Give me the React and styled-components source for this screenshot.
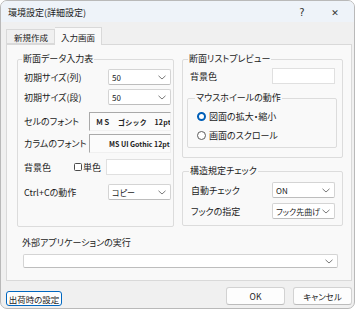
import React from 'react';
import styled, { createGlobalStyle } from 'styled-components';

const GlobalStyle = createGlobalStyle`
  html, body {
    margin: 0;
    padding: 0;
    background: #ffffff;
  }
  body {
    font-family: "Noto Sans CJK JP", "Noto Sans", sans-serif;
    font-size: 9px;
    font-feature-settings: "palt";
    color: #1b1b1b;
  }
`;

const Chevron = () => (
  <svg width="8" height="5" viewBox="0 0 8 5">
    <polyline points="0.5,0.8 4,4 7.5,0.8" fill="none" stroke="#6b6b6b" strokeWidth="0.9" />
  </svg>
);

const App = () => (
  <>
    <GlobalStyle />
    <Window>
      <TitleBar>
        <Title>環境設定(詳細設定)</Title>
        <TitleBtn>?</TitleBtn>
        <TitleBtn close>✕</TitleBtn>
      </TitleBar>
      <Body>
        <TabStrip>
          <Tab>新規作成</Tab>
          <Tab active>入力画面</Tab>
        </TabStrip>
        <TabPanel>
          <Columns>
            <Group width={157} height={174} pad="4px 2px 0 6px">
              <Legend>断面データ入力表</Legend>
              <Row>
                <Label>初期サイズ(列)</Label>
                <Combo width={63}>
                  <ComboText>50</ComboText>
                  <Chevron />
                </Combo>
              </Row>
              <Row gap={4}>
                <Label>初期サイズ(段)</Label>
                <Combo width={63}>
                  <ComboText>50</ComboText>
                  <Chevron />
                </Combo>
              </Row>
              <Row gap={7}>
                <Label>セルのフォント</Label>
                <FontBox indent={6} spacing={0.3}>ＭＳ　ゴシック　12pt</FontBox>
              </Row>
              <Row gap={3}>
                <Label>カラムのフォント</Label>
                <FontBox indent={19} spacing={0}>MS UI Gothic 12pt</FontBox>
              </Row>
              <Row gap={6}>
                <Label fixed={50}>背景色</Label>
                <Check />
                <CheckText>単色</CheckText>
                <TextBox width={65} height={16} />
              </Row>
              <Row gap={9}>
                <Label>Ctrl+Cの動作</Label>
                <Combo width={63}>
                  <ComboText>コピー</ComboText>
                  <Chevron />
                </Combo>
              </Row>
            </Group>
            <RightColumn>
              <Group width={161} height={105} pad="3px 7px 0 7px">
                <Legend>断面リストプレビュー</Legend>
                <Row>
                  <Label>背景色</Label>
                  <TextBox width={63} height={16} />
                </Row>
                <SubGroup>
                  <Legend>マウスホイールの動作</Legend>
                  <RadioRow>
                    <Radio checked />
                    <span>図面の拡大・縮小</span>
                  </RadioRow>
                  <RadioRow gap={7}>
                    <Radio />
                    <span>画面のスクロール</span>
                  </RadioRow>
                </SubGroup>
              </Group>
              <Group width={161} height={61} pad="5px 7px 0 8px">
                <Legend>構造規定チェック</Legend>
                <Row>
                  <Label>自動チェック</Label>
                  <Combo width={63}>
                    <ComboText>ON</ComboText>
                    <Chevron />
                  </Combo>
                </Row>
                <Row gap={5}>
                  <Label>フックの指定</Label>
                  <Combo width={63}>
                    <ComboText>フック先曲げ</ComboText>
                    <Chevron />
                  </Combo>
                </Row>
              </Group>
            </RightColumn>
          </Columns>
          <ExtSection>
            <ExtLabel>外部アプリケーションの実行</ExtLabel>
            <ExtCombo>
              <ComboText />
              <Chevron />
            </ExtCombo>
          </ExtSection>
        </TabPanel>
        <Footer>
          <ResetButton>出荷時の設定</ResetButton>
          <Spacer />
          <Button>OK</Button>
          <Button>キャンセル</Button>
        </Footer>
      </Body>
    </Window>
  </>
);

const Window = styled.div`
  width: 355px;
  height: 309px;
  box-sizing: border-box;
  background: #f0f0f0;
  border: 1px solid #b9b9b9;
  border-radius: 7px;
  overflow: hidden;
  display: flex;
  flex-direction: column;
`;

const TitleBar = styled.div`
  height: 21px;
  flex-shrink: 0;
  background: #eef3f9;
  display: flex;
  align-items: center;
  padding-left: 7px;
`;

const Title = styled.div`
  flex: 1;
  font-size: 9px;
  padding-top: 2px;
`;

const TitleBtn = styled.div`
  width: ${props => (props.close ? '38px' : '28px')};
  text-align: center;
  font-size: ${props => (props.close ? '9px' : '10px')};
  font-family: "DejaVu Sans", sans-serif;
  color: #333;
  padding-top: 2px;
`;

const Body = styled.div`
  flex: 1;
  display: flex;
  flex-direction: column;
  padding: 5px 0 0 5px;
`;

const TabStrip = styled.div`
  display: flex;
  align-items: flex-end;
  height: 17px;
  position: relative;
  z-index: 1;
`;

const Tab = styled.div`
  box-sizing: border-box;
  height: ${props => (props.active ? '18px' : '15px')};
  padding: ${props => (props.active ? '0 6px' : '0 6px 0 7px')};
  background: ${props => (props.active ? '#f9f9f9' : '#f0f0f0')};
  border: 1px solid #d9d9d9;
  border-bottom: ${props => (props.active ? 'none' : '1px solid #d9d9d9')};
  border-left: ${props => (props.active ? 'none' : '1px solid #d9d9d9')};
  margin-bottom: ${props => (props.active ? '-1px' : '0')};
  display: flex;
  align-items: center;
  font-size: 8.5px;
`;

const TabPanel = styled.div`
  box-sizing: border-box;
  width: 346px;
  height: 237px;
  background: #f9f9f9;
  border: 1px solid #d9d9d9;
  padding: 8px 8px 0 10px;
`;

const Columns = styled.div`
  display: flex;
  gap: 8px;
  align-items: flex-start;
`;

const RightColumn = styled.div`
  display: flex;
  flex-direction: column;
  gap: 7px;
`;

const Group = styled.fieldset`
  box-sizing: border-box;
  width: ${props => props.width}px;
  height: ${props => props.height}px;
  margin: 0;
  padding: ${props => props.pad};
  border: 1px solid #dcdcdc;
  border-radius: 2px;
  min-width: 0;
`;

const SubGroup = styled.fieldset`
  box-sizing: border-box;
  height: 56px;
  margin: 8px -2px 0 -3px;
  padding: 6px 4px 0 9px;
  border: 1px solid #dcdcdc;
  border-radius: 2px;
  min-width: 0;
`;

const Legend = styled.legend`
  padding: 0 1px;
  margin-left: -2px;
  line-height: 12px;
  font-size: 9px;
  color: #1b1b1b;
`;

const Row = styled.div`
  display: flex;
  align-items: center;
  margin-top: ${props => props.gap || 0}px;
`;

const Label = styled.span`
  white-space: nowrap;
  flex: ${props => (props.fixed ? `0 0 ${props.fixed}px` : '1')};
  font-size: 9px;
`;

const Combo = styled.div`
  box-sizing: border-box;
  width: ${props => props.width}px;
  height: 16px;
  background: #ffffff;
  border: 1px solid #d4d4d4;
  border-bottom-color: #bdbdbd;
  border-radius: 2px;
  display: flex;
  align-items: center;
  gap: 1px;
  padding: 0 4px 0 3px;
  font-size: 8px;
  white-space: nowrap;
  flex-shrink: 0;
`;

const ExtCombo = styled(Combo)`
  width: 315px;
  height: 14px;
  margin-left: 1px;
`;

const ComboText = styled.span`
  flex: 1;
  overflow: hidden;
`;

const TextBox = styled.div`
  box-sizing: border-box;
  width: ${props => props.width}px;
  height: ${props => props.height}px;
  margin-left: auto;
  background: #ffffff;
  border: 1px solid #e0e0e0;
`;

const FontBox = styled.div`
  box-sizing: border-box;
  width: 82px;
  height: 19px;
  flex-shrink: 0;
  background: #fbfbfb;
  border-top: 1px solid #a9a9a9;
  border-left: 1px solid #a9a9a9;
  border-right: 1px solid #f0f0f0;
  border-bottom: 1px solid #f0f0f0;
  overflow: hidden;
  white-space: nowrap;
  display: flex;
  align-items: center;
  padding-left: ${props => props.indent}px;
  font-size: 7px;
  font-feature-settings: normal;
  letter-spacing: ${props => props.spacing}px;
  font-weight: bold;
  color: #222;
`;

const Check = styled.span`
  box-sizing: border-box;
  width: 8px;
  height: 8px;
  border: 1px solid #4a4a4a;
  border-radius: 1.5px;
  background: #fff;
  flex-shrink: 0;
`;

const CheckText = styled.span`
  margin-left: 1px;
  font-size: 9px;
`;

const RadioRow = styled.div`
  display: flex;
  align-items: center;
  gap: 3px;
  height: 12px;
  margin-top: ${props => props.gap || 0}px;
  font-size: 9px;
`;

const Radio = styled.span`
  box-sizing: border-box;
  width: 9px;
  height: 9px;
  border-radius: 50%;
  flex-shrink: 0;
  border: ${props => (props.checked ? '2.5px solid #005fb8' : '1px solid #5c5c5c')};
  background: #fff;
`;

const ExtSection = styled.div`
  margin-top: 10px;
  padding-left: 5px;
  display: flex;
  flex-direction: column;
  gap: 5px;
`;

const ExtLabel = styled.div`
  line-height: 12px;
  font-size: 9px;
`;

const Footer = styled.div`
  display: flex;
  align-items: flex-start;
  gap: 8px;
  padding: 6px 2px 0 0;
`;

const Spacer = styled.div`
  flex: 1;
`;

const ResetButton = styled.div`
  box-sizing: border-box;
  width: 56px;
  height: 15px;
  margin-top: 4px;
  background: #fdfdfd;
  border: 1.5px solid #0067c0;
  border-radius: 3px;
  display: flex;
  align-items: center;
  justify-content: center;
  font-size: 8.5px;
  white-space: nowrap;
`;

const Button = styled.div`
  box-sizing: border-box;
  width: 59px;
  height: 18px;
  background: #fdfdfd;
  border: 1px solid #d2d2d2;
  border-bottom-color: #bcbcbc;
  border-radius: 3px;
  display: flex;
  align-items: center;
  justify-content: center;
  font-size: 8.5px;
`;

export default App;
